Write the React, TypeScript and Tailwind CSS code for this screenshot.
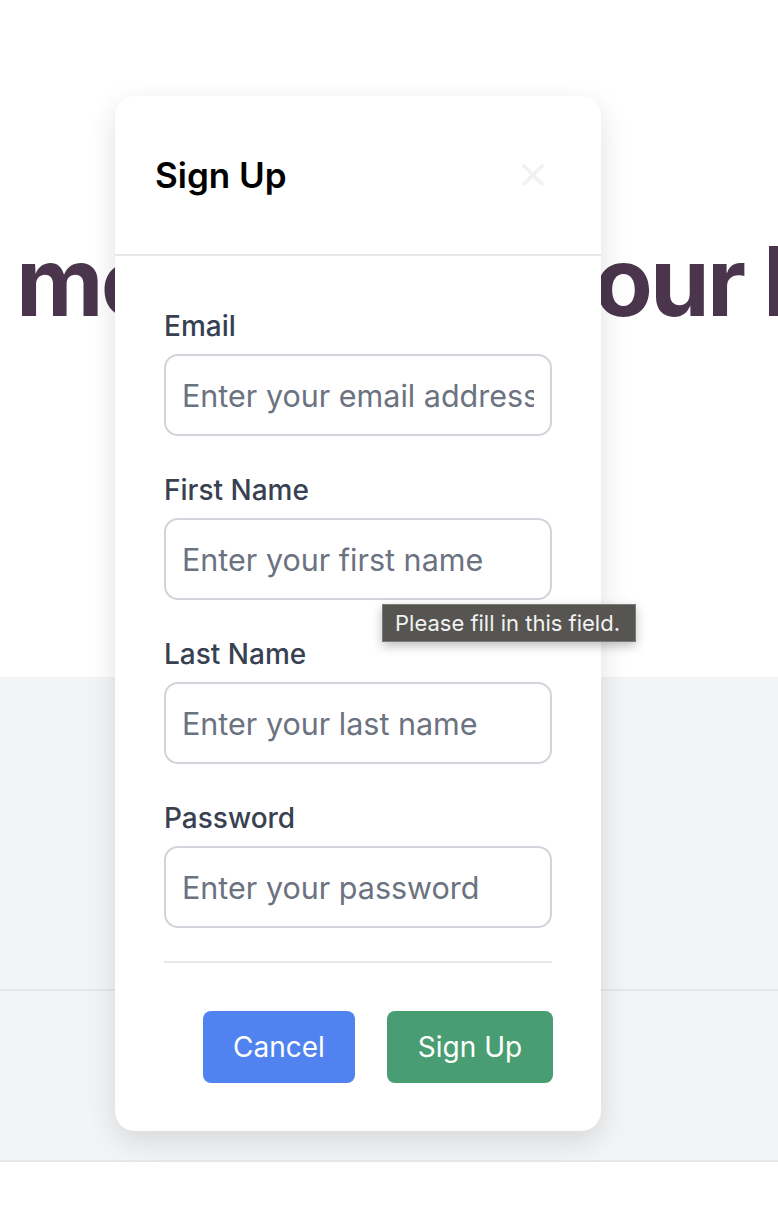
import { X } from "lucide-react";

const FIELDS = [
  { label: "Email", placeholder: "Enter your email address", type: "email" },
  { label: "First Name", placeholder: "Enter your first name", type: "text" },
  { label: "Last Name", placeholder: "Enter your last name", type: "text" },
  { label: "Password", placeholder: "Enter your password", type: "password" },
];

function Field({ label, placeholder, type }: { label: string; placeholder: string; type: string }) {
  return (
    <div className="flex flex-col gap-[10px]">
      <label className="text-[28px] leading-[36px] font-medium text-[#374151]">{label}</label>
      <input
        type={type}
        placeholder={placeholder}
        className="h-[82px] w-full rounded-[14px] border-2 border-[#d1d5db] bg-white px-[16px] text-[30.5px] text-[#111827] placeholder:text-[#6b7280] outline-none"
      />
    </div>
  );
}

export default function App() {
  return (
    <div className="relative min-h-[1228px] overflow-hidden bg-white font-['Inter',sans-serif]">
      {/* page behind the dialog */}
      <section className="h-[677px] bg-white pt-[233px] px-4">
        <h1 className="whitespace-nowrap text-[96px] leading-none font-bold tracking-[-0.03em] text-[#4a354d]">
          more out of your life
        </h1>
      </section>
      <section className="h-[314px] bg-[#f3f4f6] border-b-2 border-[#e5e7eb]" />
      <section className="h-[171px] bg-[#f3f4f6] border-b-2 border-[#e5e7eb]" />

      {/* dialog */}
      <div className="absolute left-[115px] top-[96px] w-[486px] rounded-[20px] bg-white shadow-[0_10px_30px_rgba(0,0,0,0.12)]">
        <div className="flex h-[160px] items-center justify-between border-b-2 border-[#e5e7eb] pl-[40px] pr-[50px]">
          <h2 className="text-[35px] font-semibold text-black">Sign Up</h2>
          <X className="h-[36px] w-[36px] text-[#f1f1f1]" strokeWidth={2.5} />
        </div>
        <form className="px-[49px] pt-[52px] pb-[48px]">
          <div className="flex flex-col gap-[36px]">
            {FIELDS.map((f) => (
              <Field key={f.label} {...f} />
            ))}
          </div>
          <div className="mt-[33px] h-[2px] bg-[#e5e7eb]" />
          <div className="mt-[48px] mr-[-1px] flex justify-end gap-[32px]">
            <button
              type="button"
              className="h-[72px] w-[152px] rounded-[8px] bg-[#5083ef] text-[28px] text-white"
            >
              Cancel
            </button>
            <button
              type="submit"
              className="h-[72px] w-[166px] rounded-[8px] bg-[#489e72] text-[28px] text-white"
            >
              Sign Up
            </button>
          </div>
        </form>
      </div>

      {/* browser validation bubble */}
      <div className="absolute left-[382px] top-[604px] flex h-[38px] w-[254px] items-center border border-[#7b7a77] bg-[#565551] pl-[12px] text-[22px] text-[#f2f2f2] shadow-[0_4px_10px_rgba(0,0,0,0.25)]">
        Please fill in this field.
      </div>
    </div>
  );
}
